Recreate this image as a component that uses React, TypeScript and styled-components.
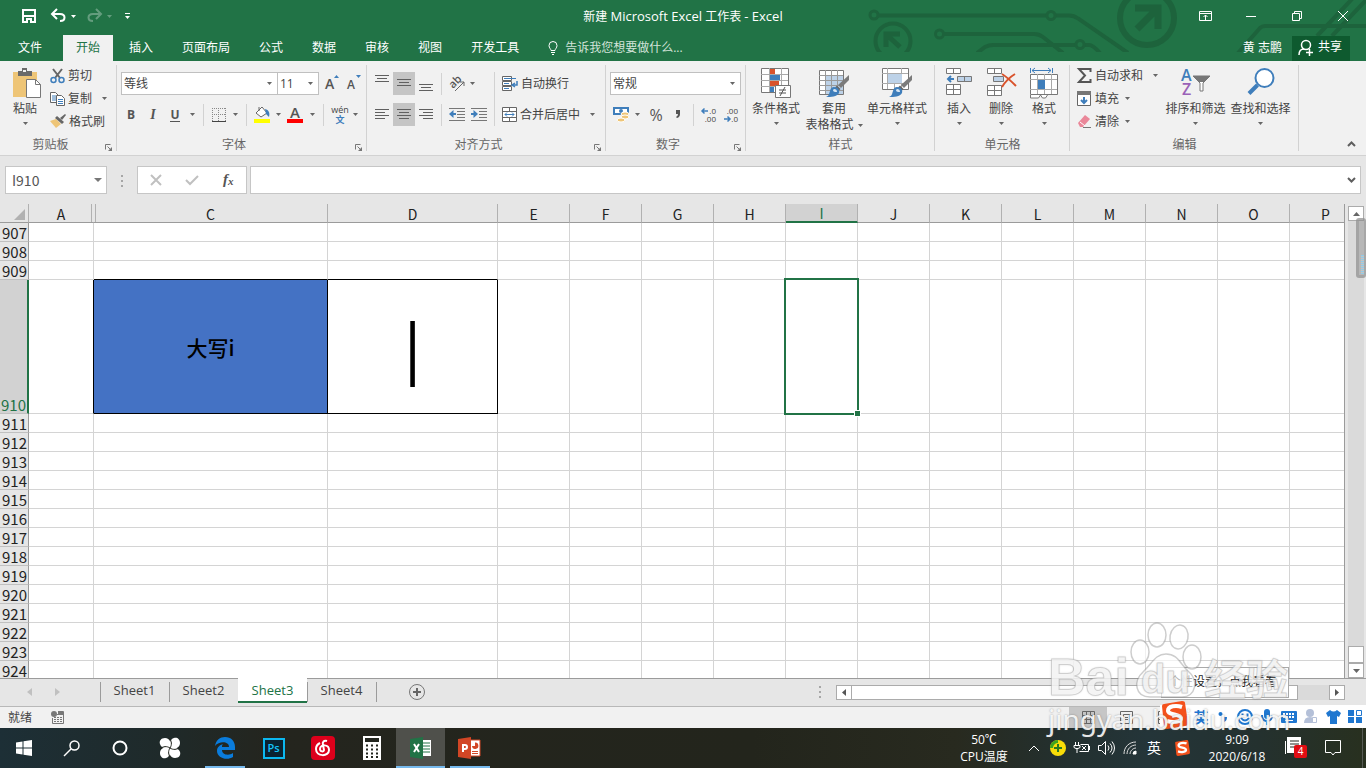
import React from "react";
import styled, { createGlobalStyle, css } from "styled-components";

const GREEN = "#217346";
const BLUE = "#3f7ebb";
const GREY = "#5e5e5e";

const Global = createGlobalStyle`
  *, *::before, *::after { box-sizing: border-box; }
  body { margin: 0; background: #e6e6e6; }
  button, input, select { font: inherit; color: inherit; }
  button { border: 0; background: none; padding: 0; margin: 0; }
  svg { overflow: visible; }
`;

const App_ = styled.div`
  position: relative;
  display: flex;
  flex-direction: column;
  height: 100vh;
  overflow: hidden;
  font: 12px/16px "Open Sans", "Noto Sans CJK SC", sans-serif;
  color: #444;
`;

/* ---------- title bar and tabs ---------- */
const Header = styled.header`
  position: relative;
  flex: none;
  background: ${GREEN};
  color: #fff;
`;
const Circuit = styled.svg`
  position: absolute;
  top: 0;
  right: 0;
  overflow: hidden;
`;
const TitleBar = styled.div`
  position: relative;
  display: grid;
  grid-template-columns: 1fr auto 1fr;
  align-items: center;
  height: 35px;
  padding-bottom: 3px;
`;
const Latin = styled.span`
  font-size: 13px;
`;
const QuickBar = styled.div`
  display: flex;
  align-items: center;
  padding-left: 22px;
`;
const QuickButton = styled.button<{ $gap?: number; $faint?: boolean }>`
  display: flex;
  align-items: center;
  gap: 5px;
  margin-right: ${(p) => p.$gap ?? 10}px;
  opacity: ${(p) => (p.$faint ? 0.3 : 1)};
`;
const WindowButtons = styled.div`
  display: flex;
  justify-content: flex-end;
`;
const WindowButton = styled.button`
  display: flex;
  justify-content: center;
  align-items: center;
  width: 46px;
  height: 30px;
`;
const TabBar = styled.nav`
  position: relative;
  display: flex;
  gap: 3px;
  height: 26px;
`;
const Tab = styled.button<{ $active?: boolean; $pad?: number }>`
  padding: 0 ${(p) => p.$pad ?? 13}px 1px;
  ${(p) => p.$active && css`background: #f1f1f1; color: ${GREEN};`}
`;
const TellMe = styled.button`
  display: flex;
  align-items: center;
  gap: 7px;
  padding-left: 13px;
  color: #d3e3da;
`;
const Account = styled.div`
  display: flex;
  align-items: center;
  gap: 10px;
  margin: 0 16px 0 auto;
`;
const Share = styled.button`
  display: flex;
  align-items: center;
  gap: 4px;
  height: 25px;
  padding: 0 8px 2px 6px;
  background: #0e5a2f;
`;

/* ---------- ribbon ---------- */
const Ribbon = styled.div`
  display: flex;
  flex: none;
  height: 95px;
  background: #f1f1f1;
  border-bottom: 1px solid #d2d2d2;
`;
const GroupBox = styled.section<{ $w: number }>`
  display: flex;
  flex-direction: column;
  flex: none;
  position: relative;
  width: ${(p) => p.$w}px;
  &::after {
    content: "";
    position: absolute;
    top: 4px;
    right: 0;
    bottom: 4px;
    border-right: 1px solid #d2d2d2;
  }
`;
const GroupBody = styled.div<{ $pad?: number }>`
  display: flex;
  height: 72px;
  padding-left: ${(p) => p.$pad ?? 3}px;
`;
const GroupFoot = styled.div`
  display: flex;
  align-items: center;
  height: 22px;
  padding-top: 1px;
  color: #666;
  span { flex: 1; text-align: center; }
  svg { margin: 6px 5px 0 4px; }
`;
const Stack = styled.div`
  display: flex;
  flex-direction: column;
  padding-top: 3px;
`;
const Lines = styled.div`
  display: flex;
  flex-direction: column;
  gap: 8px;
  padding-top: 11px;
`;
const Line = styled.div`
  display: flex;
  align-items: center;
  height: 23px;
`;
const SmallButton = styled.button<{ $gap?: number }>`
  display: flex;
  align-items: center;
  height: 23px;
  gap: 3px;
  white-space: nowrap;
  svg + span + svg { margin-left: ${(p) => p.$gap ?? 3}px; }
`;
const Tool = styled.button<{ $w?: number; $on?: boolean }>`
  display: flex;
  flex: none;
  justify-content: center;
  align-items: center;
  width: ${(p) => p.$w ?? 22}px;
  height: 23px;
  background: ${(p) => (p.$on ? "#c5c5c5" : "none")};
`;
const Letter = styled.span`
  font: 700 12px/16px "Open Sans", sans-serif;
  color: #555;
`;
const ItalicLetter = styled(Letter)`
  font-family: "Liberation Serif", serif;
  font-size: 14px;
  font-style: italic;
`;
const UnderLetter = styled(Letter)`
  border-bottom: 1px solid #555;
  line-height: 13px;
`;
const Percent = styled(Letter)`
  font-size: 16px;
  font-weight: 400;
`;
const Rule = styled.i<{ $m?: number; $h?: number }>`
  flex: none;
  width: 1px;
  height: ${(p) => p.$h ?? 22}px;
  margin: 0 ${(p) => p.$m ?? 5}px;
  background: #d2d2d2;
`;
const BigButton = styled.button<{ $w: number }>`
  display: flex;
  flex-direction: column;
  align-items: center;
  width: ${(p) => p.$w}px;
  padding-top: 7px;
  white-space: nowrap;
  & > svg:first-child { margin-bottom: 2px; flex: none; }
  & > svg:last-child { margin-top: 5px; }
`;
const BigLine = styled.span`
  display: flex;
  align-items: center;
  gap: 4px;
`;
const SelectWrap = styled.span<{ $w: number }>`
  position: relative;
  display: block;
  width: ${(p) => p.$w}px;
  margin-right: -1px;
  svg { position: absolute; right: 6px; top: 10px; }
`;
const Select = styled.select`
  appearance: none;
  display: block;
  width: 100%;
  height: 23px;
  padding: 0 2px;
  border: 1px solid #c0c0c0;
  border-radius: 0;
  background: #fff;
`;
const Collapse = styled.button`
  align-self: flex-end;
  margin: 0 10px 4px auto;
`;

/* ---------- formula bar ---------- */
const FormulaBar = styled.div`
  display: flex;
  flex: none;
  align-items: flex-start;
  height: 48px;
  padding: 10px 5px 0;
  background: #e6e6e6;
`;
const Field = styled.div<{ $w?: number }>`
  display: flex;
  align-items: center;
  height: 28px;
  padding: 0 4px 0 6px;
  background: #fff;
  border: 1px solid #c6c6c6;
  ${(p) => (p.$w ? css`width: ${p.$w}px;` : css`flex: 1;`)}
  input {
    flex: 1;
    min-width: 0;
    padding: 0;
    border: 0;
    background: none;
    font-size: 14px;
    color: #555;
    font-family: "Noto Sans CJK SC", sans-serif;
  }
`;
const Dots = styled.span`
  display: flex;
  flex-direction: column;
  gap: 3px;
  i { width: 2px; height: 2px; background: #a6a6a6; }
`;
const FormulaDots = styled(Dots)`
  margin: 9px 14px 0;
`;
const FxBox = styled.div`
  display: flex;
  width: 110px;
  height: 28px;
  margin-right: 3px;
  background: #fff;
  border: 1px solid #c6c6c6;
  button { flex: 1; display: flex; align-items: center; justify-content: center; }
`;

/* ---------- worksheet ---------- */
const SheetArea = styled.main`
  display: flex;
  flex: 1;
  min-height: 0;
`;
const GridClip = styled.div`
  flex: 1;
  min-width: 0;
  overflow: hidden;
  border-right: 1px solid #9b9b9b;
  background: linear-gradient(#e6e6e6 19px, #fff 19px);
`;
const Grid = styled.table`
  width: 1362px;
  table-layout: fixed;
  border-collapse: separate;
  border-spacing: 0;
  font: 15px/16px "Noto Sans CJK SC", sans-serif;
  color: #222;
`;
const ColHead = styled.th<{ $on?: boolean; $split?: boolean }>`
  position: relative;
  height: 19px;
  padding: 2px 0 0;
  font-weight: 400;
  font-size: 14px;
  line-height: 15px;
  background: ${(p) => (p.$on ? "#d2d2d2" : "#e6e6e6")};
  color: ${(p) => (p.$on ? GREEN : "#222")};
  border-right: 1px solid #b1b1b1;
  border-bottom: ${(p) => (p.$on ? `2px solid ${GREEN}` : "1px solid #9b9b9b")};
  ${(p) => p.$split && css`
    &::after {
      content: "";
      position: absolute;
      z-index: 1;
      top: 0;
      right: -3px;
      width: 5px;
      height: 18px;
      background: #e6e6e6;
      border: solid #b1b1b1;
      border-width: 0 1px;
    }
  `}
  svg { display: block; margin: 0 3px 0 auto; }
`;
const RowHead = styled.th<{ $on?: boolean }>`
  padding: 2px 1px 0 0;
  font-weight: 400;
  text-align: right;
  vertical-align: bottom;
  background: ${(p) => (p.$on ? "#d2d2d2" : "#e6e6e6")};
  color: ${(p) => (p.$on ? GREEN : "#222")};
  border-right: ${(p) => (p.$on ? `2px solid ${GREEN}` : "1px solid #9b9b9b")};
  border-bottom: 1px solid #c0c0c0;
`;
const Row = styled.tr<{ $h: number }>`
  height: ${(p) => p.$h}px;
`;
const Cell = styled.td<{ $blackRight?: boolean; $blackBottom?: boolean; $fill?: string }>`
  position: relative;
  padding: 0;
  text-align: center;
  background: ${(p) => p.$fill ?? "#fff"};
  border-right: 1px solid ${(p) => (p.$blackRight ? "#000" : "#d4d4d4")};
  border-bottom: 1px solid ${(p) => (p.$blackBottom ? "#000" : "#d4d4d4")};
`;
const Caption = styled.span`
  font-size: 21px;
  line-height: 28px;
  font-weight: 500;
  color: #000;
`;
const HugeLetter = styled.span`
  display: block;
  padding-top: 10px;
  font: 350 92px/122px "Open Sans", sans-serif;
  color: #000;
`;
const Selection = styled.div`
  position: absolute;
  inset: -2px;
  z-index: 1;
  border: 2px solid ${GREEN};
  &::after {
    content: "";
    position: absolute;
    right: -4px;
    bottom: -4px;
    width: 7px;
    height: 7px;
    background: ${GREEN};
    border: 1px solid #fff;
  }
`;
const VScroll = styled.div`
  display: flex;
  flex-direction: column;
  flex: none;
  width: 21px;
  padding: 2px 2px 0 3px;
  background: #e6e6e6;
`;
const ScrollButton = styled.button`
  display: flex;
  align-items: center;
  justify-content: center;
  flex: none;
  width: 16px;
  height: 15px;
  background: #fff;
  border: 1px solid #ababab;
`;
const VTrack = styled.div`
  display: flex;
  flex: 1;
  flex-direction: column;
  justify-content: flex-end;
  background: #dadada;
`;
const VThumb = styled.div`
  height: 17px;
  background: #fff;
  border: 1px solid #ababab;
`;
const FloatThumb = styled.div`
  position: absolute;
  top: 218px;
  right: 0;
  width: 10px;
  height: 60px;
  border: 3px solid rgba(150, 150, 150, 0.55);
  border-right-width: 2px;
  border-radius: 3px;
  background: rgba(140, 140, 140, 0.45);
  &::after {
    content: "";
    position: absolute;
    right: 0;
    bottom: 1px;
    width: 3px;
    height: 19px;
    background: repeating-linear-gradient(#8fcbe8 0 1px, #c3c3c3 1px 2px);
  }
`;

/* ---------- sheet tabs and status ---------- */
const SheetBar = styled.div`
  display: flex;
  flex: none;
  height: 28px;
  padding-right: 21px;
  background: #e6e6e6;
  box-shadow: inset 0 1px #9b9b9b;
`;
const SheetNav = styled.div`
  display: flex;
  align-items: center;
  gap: 23px;
  width: 100px;
  padding-left: 27px;
`;
const SheetTab = styled.button<{ $active?: boolean }>`
  width: 69px;
  height: 25px;
  font-size: 13px;
  line-height: 20px;
  padding-bottom: ${(p) => (p.$active ? 0 : 2)}px;
  color: ${(p) => (p.$active ? GREEN : "#444")};
  ${(p) => p.$active
    ? css`background: #fff; border-bottom: 2px solid ${GREEN}; font-weight: 500;`
    : css`background: linear-gradient(#9b9b9b, #9b9b9b) 0 4px / 1px 20px no-repeat;`}
`;
const TabEnd = styled.i`
  width: 1px;
  height: 20px;
  margin: 4px 32px 0 0;
  background: #9b9b9b;
`;
const NewSheet = styled.button`
  display: flex;
  align-items: center;
`;
const HScroll = styled.div`
  display: flex;
  align-items: center;
  width: 526px;
  margin-left: auto;
`;
const HTrack = styled.div`
  flex: 1;
  height: 15px;
  background: #dadada;
`;
const HThumb = styled.div`
  width: 447px;
  height: 15px;
  margin-left: -1px;
  background: #fff;
  border: 1px solid #ababab;
`;
const StatusBar = styled.footer`
  display: flex;
  flex: none;
  align-items: center;
  gap: 19px;
  height: 22px;
  padding: 0 8px;
  background: #f1f1f1;
  border-top: 1px solid #b8b8b8;
`;
const ViewButtons = styled.div`
  display: flex;
  align-self: stretch;
  margin: 0 175px 0 auto;
`;
const ViewButton = styled.button<{ $on?: boolean }>`
  display: flex;
  align-items: center;
  justify-content: center;
  width: 38px;
  background: ${(p) => (p.$on ? "#c6c6c6" : "none")};
`;

/* ---------- taskbar ---------- */
const TaskBar = styled.div`
  display: flex;
  flex: none;
  height: 40px;
  padding-right: 3px;
  color: #fff;
  background: linear-gradient(90deg, #1d2f36 0, #1f2a2a 12%, #24251e 20%, #23251c 55%, #282a1f 70%, #23302f 78%, #243539 84%, #24312f 92%, #28301f 100%);
`;
const Task = styled.button<{ $w?: number; $run?: boolean; $active?: boolean }>`
  position: relative;
  display: flex;
  align-items: center;
  justify-content: center;
  width: ${(p) => p.$w ?? 49}px;
  background: ${(p) => (p.$active ? "#4f504b" : "none")};
  ${(p) => p.$run && css`
    &::after {
      content: "";
      position: absolute;
      left: ${p.$active ? 0 : 5}px;
      right: ${p.$active ? 0 : 4}px;
      bottom: 0;
      height: 2px;
      background: #76b9ed;
    }
  `}
`;
const Apps = styled.div`
  display: flex;
  margin-left: 4px;
`;
const TrayText = styled.div<{ $w: number }>`
  width: ${(p) => p.$w}px;
  padding-top: 3px;
  text-align: center;
  line-height: 17px;
  white-space: nowrap;
`;
const Tray = styled.div`
  display: flex;
  margin-left: auto;
`;
const TrayIcon = styled.button<{ $w?: number }>`
  display: flex;
  align-items: center;
  justify-content: center;
  width: ${(p) => p.$w ?? 24}px;
  font-size: 14px;
`;
const ShowDesktop = styled.button`
  width: 12px;
  border-right: 1px solid #565a54;
`;
const PsMark = styled.span`
  display: flex;
  justify-content: center;
  width: 22px;
  height: 21px;
  border: 2px solid #0cb8f0;
  background: #0a2231;
  color: #12c4fb;
  font-size: 11px;
  font-weight: 600;
`;

/* ---------- floating layers ---------- */
const Tooltip = styled.div`
  position: absolute;
  right: 77px;
  bottom: 70px;
  width: 128px;
  height: 31px;
  padding-right: 4px;
  border: 1px solid #aaa;
  background: #fff;
  text-align: center;
  line-height: 28px;
  color: #222;
`;
const ImeBar = styled.div`
  position: absolute;
  right: 0;
  bottom: 40px;
  display: flex;
  align-items: center;
  height: 23px;
  background: #fff;
  color: #1f77d0;
`;
const ImeButton = styled.button`
  display: flex;
  align-items: center;
  justify-content: center;
  width: 22px;
  font-size: 15px;
  font-weight: 700;
`;
const ImeLogo = styled(ImeButton)`
  width: 30px;
  padding: 0 4px 4px 0;
  justify-content: flex-start;
  svg { flex: none; }
`;
const Watermark = styled.div`
  position: absolute;
  right: 76px;
  bottom: 28px;
  width: 242px;
  pointer-events: none;
  color: rgba(255, 255, 255, 0.8);
  text-shadow: 0 0 2px rgba(110, 110, 110, 0.4);
  white-space: nowrap;
`;
const BrandRow = styled.div`
  display: flex;
  align-items: flex-end;
  height: 76px;
  -webkit-text-stroke: 1px rgba(150, 150, 150, 0.35);
`;
const BrandLatin = styled.span`
  width: 81px;
  font: 700 52px/42px "Liberation Sans", sans-serif;
`;
const BrandPaw = styled.span`
  position: relative;
  width: 74px;
  height: 76px;
  svg { display: block; }
`;
const PawText = styled.span`
  position: absolute;
  left: 12px;
  bottom: 0;
  font: 700 40px/38px "Liberation Sans", sans-serif;
`;
const BrandHan = styled.span`
  margin-left: 1px;
  font: 700 42px/42px "Noto Sans CJK SC", sans-serif;
`;
const Site = styled.div`
  font: 28px/42px "Noto Sans", sans-serif;
  color: rgba(255, 255, 255, 0.9);
  text-shadow: 0 0 2px rgba(90, 90, 90, 0.6);
`;

/* ---------- drawings ---------- */
type IconProps = { w?: number; h?: number; children?: React.ReactNode };
const Icon = ({ w = 16, h = 16, children }: IconProps) => (
  <svg width={w} height={h} viewBox={`0 0 ${w} ${h}`} fill="none" stroke={GREY} aria-hidden="true">
    {children}
  </svg>
);
const Caret = ({ fill = "#666" }: { fill?: string }) => (
  <svg width="5" height="3" viewBox="0 0 5 3" fill={fill} aria-hidden="true"><path d="M0 0h5L2.5 3z" /></svg>
);
const CaretTool = ({ w = 12, label }: { w?: number; label: string }) => (
  <Tool $w={w} aria-label={label}><Caret /></Tool>
);
const Launcher = () => (
  <Icon w={7} h={7}><path d="M.5 5.5v-5h5" stroke="#777" /><path d="M2.5 2.5l3 3" stroke="#777" /><path d="M7 3v4H3z" fill="#777" stroke="none" /></Icon>
);
const AlignIcon = ({ widths, top = 2, right, center }: { widths: number[]; top?: number; right?: boolean; center?: boolean }) => (
  <Icon w={14} h={20}>
    {widths.map((n, i) => {
      const x = center ? (14 - n) / 2 : right ? 14 - n : 0;
      return <path key={i} d={`M${x} ${top + i * 3 + 0.5}h${n}`} stroke="#606060" />;
    })}
  </Icon>
);
const IndentIcon = ({ flip }: { flip?: boolean }) => (
  <Icon w={17} h={14}>
    <path d="M0 .5h16M8 3.5h8M8 6.5h8M8 9.5h8M0 12.5h16" stroke="#777" />
    <g transform={flip ? "translate(7 -1) scale(-1 1)" : "translate(0 -1)"}><path d="M7 7H2" stroke={BLUE} strokeWidth="2" /><path d="M4.5 3v8L0 7z" fill={BLUE} stroke="none" /></g>
  </Icon>
);
const Brush = ({ x, y }: { x: number; y: number }) => (
  <g transform={`translate(${x} ${y})`} stroke="none">
    <path d="M23 0v5L15 13l-3-3z" fill="#7b7b7b" />
    <path d="M11 10.5l3.500 3.500-2 2-3.500-3.500z" fill="#666" />
    <path d="M8 12c4 0 6 3 5 6-2 4-8 4-13 4 3-1 3-3 4-6 .6-2.500 2-4 4-4z" fill={BLUE} />
    <path d="M8 14c2 0 3 1 3 3-2 0-4 0-4-2z" fill="#d9e7f4" />
  </g>
);
const SogouMark = ({ size }: { size: number }) => (
  <svg width={size} height={size} viewBox="0 0 28 28" aria-hidden="true">
    <path d="M2 5Q2 3 4 3L22 0Q25 0 25 2l3 20q0 3-3 3L7 28q-3 0-3-3z" fill="#f4511c" />
    <path d="M22 6c-6-2-14-1-14 3.500 0 5 12 3 13 7.500.5 4-8 5-14 3" fill="none" stroke="#fff" strokeWidth="4" />
  </svg>
);
const Disk = () => (
  <Icon w={14} h={14}><path d="M1 1h12v12H1z" stroke="#fff" strokeWidth="2" /><path d="M2 7h10" stroke="#fff" strokeWidth="2" /><path d="M4 9h6v5H4z" fill="#fff" stroke="none" /><path d="M6 11h2v3H6z" fill={GREEN} stroke="none" /></Icon>
);
const Undo = () => (
  <Icon w={15} h={14}><path d="M6 0L1 5l5 5M1 5h8c6 0 6 7 0 7" stroke="#fff" strokeWidth="2" /></Icon>
);
const Redo = () => (
  <Icon w={15} h={14}><path d="M9 0l5 5-5 5M14 5H6c-6 0-6 7 0 7" stroke="#fff" strokeWidth="2" /></Icon>
);
const PasteIcon = () => (
  <Icon w={34} h={31}>
    <g transform="translate(4 0)">
      <path d="M1 4h24v25H1z" fill="#eec577" stroke="none" />
      <path d="M6 8V3h4V0h5v3h5v5z" fill="#6a6a6a" stroke="none" /><path d="M11 2h3v2h-3z" fill="#f1f1f1" stroke="none" />
      <path d="M14.500 11.500h9l5 5v13h-14z" fill="#fff" stroke="#777" /><path d="M23.500 11.500v5h5" stroke="#777" />
    </g>
  </Icon>
);
const CutIcon = () => (
  <Icon w={15} h={16}><path d="M3 1l7 9M12 1L5 10" stroke="#666" strokeWidth="2" /><circle cx="3.500" cy="12" r="2.500" stroke={BLUE} strokeWidth="1.500" /><circle cx="11.500" cy="12" r="2.500" stroke={BLUE} strokeWidth="1.500" /></Icon>
);
const CopyIcon = () => (
  <Icon w={15} h={15}><path d="M.5 1.500h5l3 3v7h-8z" fill="#fff" stroke="#666" /><path d="M2 5h4M2 7h4M2 9h4" stroke={BLUE} /><path d="M6.500 4.500h5l3 3v7h-8z" fill="#fff" stroke="#666" /><path d="M8 8.500h5M8 10.500h5M8 12.500h5" stroke={BLUE} /></Icon>
);
const PainterIcon = () => (
  <Icon w={16} h={15}><path d="M0 7l6-2 5 5-5 4z" fill="#eec577" stroke="none" /><path d="M5 4l2-2 7 6-2 2z" fill="#666" stroke="none" /><path d="M10 4l5-4 1 1-4 5z" fill="#666" stroke="none" /></Icon>
);
const SizeIcon = ({ up }: { up?: boolean }) => (
  <svg width="14" height="16" viewBox="0 0 14 16" fontFamily="Open Sans" fontWeight="600" aria-hidden="true">
    <text x="0" y="13" fontSize={up ? 14 : 12} fill="#555">A</text>
    <path d={up ? "M9 2h5l-2.500-3z" : "M9 -1h5l-2.500 3z"} fill={BLUE} />
  </svg>
);
const BorderIcon = () => (
  <Icon w={14} h={14}><path d="M0 .5h14M0 6.500h14M.5 0v13M6.500 0v13M13.500 0v13" stroke="#888" strokeDasharray="1 1" /><path d="M0 13.500h14" stroke="#444" /></Icon>
);
const FillIcon = () => (
  <Icon w={16} h={17}><path d="M2 7l6-6 5 6-6 4z" fill="#fff" stroke="#666" /><path d="M5 5V1" stroke="#666" /><path d="M11 3c4 1 5 4 4 8l-3-3z" fill={BLUE} stroke="none" /><path d="M0 13h16v4H0z" fill="#ff0" stroke="none" /></Icon>
);
const FontColorIcon = () => (
  <svg width="16" height="17" viewBox="0 0 16 17" aria-hidden="true"><text x="8" y="12" textAnchor="middle" fontFamily="Open Sans" fontSize="15" fontWeight="600" fill="#555">A</text><path d="M0 13h16v4H0z" fill="#f00" /></svg>
);
const PinyinIcon = () => (
  <svg width="18" height="18" viewBox="0 0 18 18" textAnchor="middle" aria-hidden="true"><text x="9" y="7" fontFamily="Open Sans" fontSize="9" fill="#444">wén</text><text x="9" y="17" fontFamily="Noto Sans CJK SC" fontSize="9" fontWeight="700" fill={BLUE}>文</text></svg>
);
const OrientIcon = () => (
  <svg width="18" height="16" viewBox="0 0 18 16" fill="none" stroke="#666" aria-hidden="true"><text x="0" y="0" transform="translate(5 13) rotate(-45)" fontFamily="Open Sans" fontSize="11" fontWeight="600" fill="#555" stroke="none">ab</text><path d="M7 15l9-9M12 6h4v4" /></svg>
);
const WrapIcon = () => (
  <Icon w={16} h={16}><path d="M.5.500h9v4h-9zM.5 5.500h9v4h-9zM.5 10.500h9v4h-9z" fill="#fff" stroke="#666" /><path d="M2 2.500h12M2 7.500h5M2 12.500h5" stroke={BLUE} /><path d="M15 5v4h-4M13 7l-3 2 3 2" stroke={BLUE} strokeWidth="1.500" /></Icon>
);
const MergeIcon = () => (
  <Icon w={15} h={15}><path d="M.5.500h14v14H.5zM.5 4.500h14M.5 10.500h14M7.500.500v4M7.500 10.500v4" fill="#fff" stroke="#666" /><path d="M3 7.500h9M5 5.500l-2 2 2 2M10 5.500l2 2-2 2" stroke={BLUE} /></Icon>
);
const MoneyIcon = () => (
  <Icon w={17} h={17}><path d="M0 1h16v8H0z" fill={BLUE} stroke="none" /><path d="M2 3h12v4H2z" fill="#fff" stroke="none" /><circle cx="8" cy="5" r="2" fill={BLUE} stroke="none" /><ellipse cx="12" cy="8" rx="4" ry="2" fill="#eec577" stroke="#fff" /><ellipse cx="12" cy="11" rx="4" ry="2" fill="#eec577" stroke="#fff" /><ellipse cx="8" cy="14" rx="4" ry="2" fill="#eec577" stroke="#fff" /></Icon>
);
const DecimalIcon = ({ more }: { more?: boolean }) => (
  <svg width="16" height="16" viewBox="0 0 16 16" textAnchor="end" fontFamily="Open Sans" fontSize="8" fill="#444" aria-hidden="true">
    <text x="15" y="7">{more ? ".0" : ".00"}</text><text x="15" y="15">{more ? ".00" : ".0"}</text>
    {more ? <path d="M1 4h6M3.500 1.500L1 4l2.500 2.500" stroke={BLUE} fill="none" strokeWidth="1.500" /> : <path d="M1 12h6M4.500 9.500L7 12l-2.500 2.500" stroke={BLUE} fill="none" strokeWidth="1.500" />}
  </svg>
);
const CondIcon = () => (
  <Icon w={30} h={31}>
    <path d="M.5.500h27v24H.5z" fill="#fff" stroke="#777" /><path d="M0 6.500h27M0 12.500h27M0 18.500h27M8.500 0v24M20.500 0v24" stroke="#aaa" />
    <path d="M9 1h5v5H9zM9 13h9v5H9z" fill="#d9532c" stroke="none" /><path d="M9 7h10v5H9zM9 19h4v5H9z" fill={BLUE} stroke="none" />
    <path d="M14.500 17.500h15v12h-15z" fill="#fff" stroke="#777" /><path d="M18 22h7M18 25h7M24 19l-5 9" stroke="#555" />
  </Icon>
);
const TableFmtIcon = () => (
  <Icon w={30} h={31}>
    <path d="M.5 2.500h24v24H.5z" fill="#fff" stroke="#777" /><path d="M7 8h17v18H7z" fill="#bdd2e8" stroke="none" /><path d="M0 7.500h24M0 12.500h24M0 17.500h24M0 22.500h24M6.500 2v24M12.500 2v24M18.500 2v24" stroke="#999" />
    <Brush x={7} y={7} />
  </Icon>
);
const CellStyleIcon = () => (
  <Icon w={30} h={31}>
    <path d="M.5.500h26v21H.5z" fill="#fff" stroke="#777" /><path d="M0 5.500h26M0 15.500h26M5.500 0v21M19.500 0v21M12.500 15v6" stroke="#aaa" /><path d="M6 6h14v9H6z" fill="#bdd2e8" stroke="none" />
    <Brush x={7} y={7} />
  </Icon>
);
const InsertIcon = () => (
  <Icon w={28} h={31}>
    <path d="M1.500.500h14v5h-14zM8.500.500v5M1.500 16.500h14v10h-14zM1.500 21.500h14M8.500 16.500v10" fill="#fff" stroke="#777" />
    <path d="M12.500 8.500h14v5h-14zM19.500 8.500v5" fill="#bdd2e8" stroke="#777" /><path d="M9 11H3M6 8l-3 3 3 3" stroke={BLUE} strokeWidth="2" />
  </Icon>
);
const DeleteIcon = () => (
  <Icon w={30} h={31}>
    <path d="M1.500.500h14v5h-14zM8.500.500v5M1.500 17.500h14v10h-14zM1.500 22.500h14M8.500 17.500v10" fill="#fff" stroke="#777" />
    <path d="M7.500 8.500h10v5h-10z" fill="#bdd2e8" stroke="#777" /><path d="M16 6c5 3 10 8 14 12M29 6c-5 3-10 8-13 13" stroke="#d9532c" strokeWidth="2" />
  </Icon>
);
const FormatIcon = () => (
  <Icon w={30} h={31}>
    <path d="M1.500 0v5M23.500 0v5M3 2.500h19M6 0L3 2.500 6 5M19 0l3 2.500L19 5" stroke={BLUE} />
    <path d="M1.500 6.500h27v20h-27z" fill="#fff" stroke="#777" /><path d="M1 11.500h27M1 21.500h27M8.500 6v20M15.500 6v20M22.500 6v20" stroke="#aaa" /><path d="M9 12h7v9H9z" fill={BLUE} stroke="none" />
    <path d="M1.500 27v3h8l2-3 2 3h3l2-3" fill="#fff" stroke="#777" />
  </Icon>
);
const SumIcon = () => (
  <Icon w={15} h={15}><path d="M13.500 4V1H2l6 6.500L2 14h11.500v-3" stroke="#555" strokeWidth="2" /></Icon>
);
const FillDownIcon = () => (
  <Icon w={15} h={15}><path d="M.5.500h13v14H.5z" fill="#fff" stroke="#666" /><path d="M0 0h14v4H0z" fill="#777" stroke="none" /><path d="M7 6v6M4 9l3 3 3-3" stroke={BLUE} strokeWidth="2" /></Icon>
);
const EraserIcon = () => (
  <Icon w={15} h={15}><path d="M1 9l7-8 5 4-7 8H3z" fill="#ea8799" stroke="none" /><path d="M3 8l5 4" stroke="#fff" /><path d="M6 13.500h8" stroke="#777" /></Icon>
);
const SortIcon = () => (
  <svg width="30" height="31" viewBox="0 0 30 31" fontFamily="Open Sans" fontSize="16" fontWeight="600" aria-hidden="true">
    <text x="0" y="13" fill={BLUE}>A</text><text x="1" y="27" fill="#9a62b8">Z</text>
    <path d="M12 8h17l-7 7v8h-3v-8z" fill="#fff" stroke="#777" /><path d="M12 8h17l-6 6h-5z" fill="#777" />
  </svg>
);
const FindIcon = () => (
  <Icon w={30} h={31}><circle cx="18.500" cy="10" r="9" fill="#fff" stroke={BLUE} strokeWidth="2" /><path d="M11.500 17L3 25.500" stroke={BLUE} strokeWidth="4" /></Icon>
);

const CircuitArt = () => (
  <Circuit width="506" height="52" viewBox="0 0 506 52" fill="none" stroke="#1d633c" strokeWidth="4" aria-hidden="true">
    <circle cx="14" cy="15" r="4" strokeWidth="3" /><path d="M18 15.500h169M195 15.500h14q5 0 9 3L268 53" /><circle cx="191" cy="15.500" r="4" strokeWidth="3" />
    <circle cx="79.500" cy="34" r="4" strokeWidth="3" /><path d="M84 34h90q5 0 9 3l20 16M117 53l8-6q4-2 8-2h83M225 45h4q4 0 11 8" /><circle cx="220" cy="44.500" r="4" strokeWidth="3" />
    <circle cx="287" cy="18" r="27" strokeWidth="6" /><path d="M275 8h23v21M298 8l-21 21" strokeWidth="7" />
    <circle cx="33" cy="41" r="17.500" /><path d="M26 47V34h14M27 35l13 12" strokeWidth="5" />
    <path d="M378 53l22-25q2-2 5-2h101M457 36l36-38M472 36l36-38" />
  </Circuit>
);

/* ---------- parts ---------- */
const Group = ({ name, w, pad, launcher, children }: { name: string; w: number; pad?: number; launcher?: boolean; children: React.ReactNode }) => (
  <GroupBox $w={w} aria-label={name}>
    <GroupBody $pad={pad}>{children}</GroupBody>
    <GroupFoot><span>{name}</span>{launcher && <Launcher />}</GroupFoot>
  </GroupBox>
);
const Big = ({ w, icon, label }: { w: number; icon: React.ReactNode; label: string }) => (
  <BigButton $w={w}>{icon}<span>{label}</span><Caret /></BigButton>
);
const Combo = ({ w, value, label }: { w: number; value: string; label: string }) => (
  <SelectWrap $w={w}><Select aria-label={label} defaultValue={value}><option>{value}</option></Select><Caret /></SelectWrap>
);

const columns: [string, number][] = [
  ["A", 65], ["C", 234], ["D", 170], ["E", 72], ["F", 72], ["G", 72], ["H", 72], ["I", 72],
  ["J", 72], ["K", 72], ["L", 72], ["M", 72], ["N", 72], ["O", 72], ["P", 72],
];
const rows = Array.from({ length: 18 }, (_, i) => 907 + i);
const tabs = ["插入", "页面布局", "公式", "数据", "审核", "视图", "开发工具"];

const Worksheet = () => (
  <Grid>
    <colgroup><col style={{ width: 29 }} />{columns.map(([c, w]) => <col key={c} style={{ width: w }} />)}</colgroup>
    <thead>
      <tr>
        <ColHead aria-label="全选"><Icon w={11} h={11}><path d="M11 0v11H0z" fill="#b1b1b1" stroke="none" /></Icon></ColHead>
        {columns.map(([c]) => <ColHead key={c} scope="col" $on={c === "I"} $split={c === "A"}>{c}</ColHead>)}
      </tr>
    </thead>
    <tbody>
      {rows.map((r) => (
        <Row key={r} $h={r === 910 ? 134 : 19}>
          <RowHead scope="row" $on={r === 910}>{r}</RowHead>
          {columns.map(([c]) => {
            const boxed = c === "C" || c === "D";
            return (
              <Cell
                key={c}
                $blackRight={r === 910 && (boxed || c === "A")}
                $blackBottom={boxed && (r === 909 || r === 910)}
                $fill={r === 910 && c === "C" ? "#4472c4" : undefined}
              >
                {r === 910 && c === "C" && <Caption>大写i</Caption>}
                {r === 910 && c === "D" && <HugeLetter>I</HugeLetter>}
                {r === 910 && c === "I" && <Selection />}
              </Cell>
            );
          })}
        </Row>
      ))}
    </tbody>
  </Grid>
);

export default function App() {
  return (
    <App_>
      <Global />
      <Header>
        <CircuitArt />
        <TitleBar>
          <QuickBar>
            <QuickButton $gap={15} aria-label="保存"><Disk /></QuickButton>
            <QuickButton $gap={11} aria-label="撤消"><Undo /><Caret fill="#fff" /></QuickButton>
            <QuickButton $gap={13} $faint aria-label="恢复"><Redo /><Caret fill="#fff" /></QuickButton>
            <QuickButton aria-label="自定义快速访问工具栏"><Icon w={6} h={6}><path d="M0 .5h5" stroke="#fff" /><path d="M0 3h5L2.500 6z" fill="#fff" stroke="none" /></Icon></QuickButton>
          </QuickBar>
          <span>新建 <Latin>Microsoft Excel</Latin> 工作表 <Latin>- Excel</Latin></span>
          <WindowButtons>
            <WindowButton aria-label="功能区显示选项"><Icon w={13} h={10}><path d="M.5.500h12v9H.5zM.5 2.500h12M6.500 9V4M4.500 6l2-2 2 2" stroke="#fff" /></Icon></WindowButton>
            <WindowButton aria-label="最小化"><Icon w={10} h={10}><path d="M0 5.500h10" stroke="#fff" /></Icon></WindowButton>
            <WindowButton aria-label="还原"><Icon w={10} h={10}><path d="M.5 2.500h7v7h-7zM2.500 2.500v-2h7v7h-2" stroke="#fff" /></Icon></WindowButton>
            <WindowButton aria-label="关闭"><Icon w={10} h={10}><path d="M0 0l10 10M10 0L0 10" stroke="#fff" /></Icon></WindowButton>
          </WindowButtons>
        </TitleBar>
        <TabBar>
          <Tab $pad={18}>文件</Tab>
          <Tab $active>开始</Tab>
          {tabs.map((t) => <Tab key={t}>{t}</Tab>)}
          <TellMe><Icon w={10} h={14}><path d="M3 9.500C3 8 1 7 1 4.500a4 4 0 0 1 8 0C9 7 7 8 7 9.500zM3 11.500h4M4 13.500h2" stroke="#fff" /></Icon>告诉我您想要做什么...</TellMe>
          <Account>
            <span>黄 志鹏</span>
            <Share><Icon w={16} h={17}><circle cx="8" cy="6" r="4.500" stroke="#fff" strokeWidth="1.500" /><path d="M1 16c0-4 2-6 5-6M8 13.500h7M11.500 10v7" stroke="#fff" strokeWidth="1.500" /></Icon>共享</Share>
          </Account>
        </TabBar>
      </Header>

      <Ribbon>
        <Group name="剪贴板" w={117} pad={8} launcher>
          <BigButton $w={34}><PasteIcon /><span>粘贴</span><Caret /></BigButton>
          <i style={{ width: 8 }} />
          <Stack>
            <SmallButton><CutIcon /><span>剪切</span></SmallButton>
            <SmallButton $gap={7}><CopyIcon /><span>复制</span><Caret /></SmallButton>
            <SmallButton><PainterIcon /><span>格式刷</span></SmallButton>
          </Stack>
        </Group>
        <Group name="字体" w={250} launcher>
          <Lines>
            <Line>
              <Rule $m={0} $h={0} />
              <Combo w={157} value="等线" label="字体" /><Combo w={42} value="11" label="字号" />
              <Rule $m={1} $h={0} />
              <Tool aria-label="增大字号"><SizeIcon up /></Tool><Tool aria-label="减小字号"><SizeIcon /></Tool>
            </Line>
            <Line>
              <Tool><Letter>B</Letter></Tool><Tool><ItalicLetter>I</ItalicLetter></Tool><Tool><UnderLetter>U</UnderLetter></Tool>
              <CaretTool label="下划线" /><Rule />
              <Tool $w={20} aria-label="边框"><BorderIcon /></Tool><CaretTool label="边框选项" /><Rule />
              <Tool $w={20} aria-label="填充颜色"><FillIcon /></Tool><CaretTool label="填充颜色选项" />
              <Tool aria-label="字体颜色"><FontColorIcon /></Tool><CaretTool label="字体颜色选项" /><Rule />
              <Tool aria-label="拼音"><PinyinIcon /></Tool><CaretTool w={8} label="拼音选项" />
            </Line>
          </Lines>
        </Group>
        <Group name="对齐方式" w={239} pad={4} launcher>
          <Lines>
            <Line>
              <Tool aria-label="顶端对齐"><AlignIcon widths={[14, 10, 14]} top={1} center /></Tool>
              <Tool $on aria-label="垂直居中"><AlignIcon widths={[14, 10, 14]} top={5} center /></Tool>
              <Tool aria-label="底端对齐"><AlignIcon widths={[14, 10, 14]} top={10} center /></Tool>
              <Rule $m={4} /><Tool aria-label="方向"><OrientIcon /></Tool><CaretTool w={8} label="方向选项" />
            </Line>
            <Line>
              <Tool aria-label="左对齐"><AlignIcon widths={[14, 10, 14, 10]} top={4} /></Tool>
              <Tool $on aria-label="居中"><AlignIcon widths={[14, 10, 14, 10]} top={4} center /></Tool>
              <Tool aria-label="右对齐"><AlignIcon widths={[14, 10, 14, 10]} top={4} right /></Tool>
              <Rule $m={4} /><Tool aria-label="减少缩进"><IndentIcon /></Tool><Tool aria-label="增加缩进"><IndentIcon flip /></Tool>
            </Line>
          </Lines>
          <Lines><Rule $m={4} $h={54} /></Lines>
          <i style={{ width: 3 }} />
          <Lines>
            <SmallButton><WrapIcon /><span>自动换行</span></SmallButton>
            <SmallButton $gap={7}><MergeIcon /><span>合并后居中</span><Caret /></SmallButton>
          </Lines>
        </Group>
        <Group name="数字" w={140} pad={4} launcher>
          <Lines>
            <Combo w={131} value="常规" label="数字格式" />
            <Line>
              <Tool aria-label="会计数字格式"><MoneyIcon /></Tool><CaretTool w={10} label="会计选项" />
              <Rule $m={1} $h={0} />
              <Tool><Percent>%</Percent></Tool>
              <Tool aria-label="千位分隔"><Icon w={6} h={12}><path d="M1 1h4v4q0 3-3 4l-1-1q2-1 2-3H1z" fill="#555" stroke="none" /></Icon></Tool>
              <Rule $m={4} />
              <Tool aria-label="增加小数位数"><DecimalIcon more /></Tool><Tool aria-label="减少小数位数"><DecimalIcon /></Tool>
            </Line>
          </Lines>
        </Group>
        <Group name="样式" w={189} pad={1}>
          <Big w={58} icon={<CondIcon />} label="条件格式" />
          <BigButton $w={58}><TableFmtIcon /><span>套用</span><BigLine>表格格式<Caret /></BigLine></BigButton>
          <Big w={68} icon={<CellStyleIcon />} label="单元格样式" />
        </Group>
        <Group name="单元格" w={135} pad={3}>
          <Big w={42} icon={<InsertIcon />} label="插入" />
          <Big w={42} icon={<DeleteIcon />} label="删除" />
          <Big w={44} icon={<FormatIcon />} label="格式" />
        </Group>
        <Group name="编辑" w={229} pad={7}>
          <Stack>
            <SmallButton $gap={7}><SumIcon /><span>自动求和</span><Caret /></SmallButton>
            <SmallButton><FillDownIcon /><span>填充</span><Caret /></SmallButton>
            <SmallButton><EraserIcon /><span>清除</span><Caret /></SmallButton>
          </Stack>
          <i style={{ width: 5 }} />
          <Big w={65} icon={<SortIcon />} label="排序和筛选" />
          <Big w={65} icon={<FindIcon />} label="查找和选择" />
        </Group>
        <Collapse aria-label="折叠功能区"><Icon w={9} h={6}><path d="M1 5l3.500-3.500L8 5" strokeWidth="2" /></Icon></Collapse>
      </Ribbon>

      <FormulaBar>
        <Field $w={102}><input aria-label="名称框" defaultValue="I910" /><svg width="8" height="4" viewBox="0 0 8 4" fill="#777"><path d="M0 0h8L4 4z" /></svg></Field>
        <FormulaDots><i /><i /><i /></FormulaDots>
        <FxBox>
          <button aria-label="取消"><Icon w={10} h={10}><path d="M0 0l10 10M10 0L0 10" stroke="#c0c0c0" strokeWidth="2" /></Icon></button>
          <button aria-label="输入"><Icon w={14} h={11}><path d="M1 5l4 4 8-8" stroke="#c0c0c0" strokeWidth="2" /></Icon></button>
          <button aria-label="插入函数"><svg width="14" height="16" viewBox="0 0 14 16" fontFamily="Liberation Serif" fontStyle="italic" fontWeight="700" fill="#555"><text x="2" y="12" fontSize="15">f</text><text x="7" y="13" fontSize="11">x</text></svg></button>
        </FxBox>
        <Field><input aria-label="编辑栏" /><Icon w={9} h={6}><path d="M1 1l3.500 3.500L8 1" strokeWidth="2" /></Icon></Field>
      </FormulaBar>

      <SheetArea>
        <GridClip><Worksheet /></GridClip>
        <VScroll>
          <ScrollButton aria-label="向上滚动"><Icon w={7} h={4}><path d="M0 4h7L3.500 0z" fill="#666" stroke="none" /></Icon></ScrollButton>
          <VTrack><VThumb /></VTrack>
          <ScrollButton aria-label="向下滚动"><Icon w={7} h={4}><path d="M0 0h7L3.500 4z" fill="#666" stroke="none" /></Icon></ScrollButton>
        </VScroll>
      </SheetArea>

      <SheetBar>
        <SheetNav>
          <Icon w={5} h={8}><path d="M5 0v8L0 4z" fill="#c0c0c0" stroke="none" /></Icon>
          <Icon w={5} h={8}><path d="M0 0v8l5-4z" fill="#c0c0c0" stroke="none" /></Icon>
        </SheetNav>
        {["Sheet1", "Sheet2", "Sheet3", "Sheet4"].map((s) => <SheetTab key={s} $active={s === "Sheet3"}>{s}</SheetTab>)}
        <TabEnd />
        <NewSheet aria-label="新工作表"><Icon w={16} h={16}><circle cx="8" cy="8" r="7.500" stroke="#777" /><path d="M4 8h8M8 4v8" stroke="#666" strokeWidth="2" /></Icon></NewSheet>
        <HScroll>
          <Dots><i /><i /><i /></Dots>
          <i style={{ width: 15 }} />
          <ScrollButton aria-label="向左滚动"><Icon w={4} h={7}><path d="M4 0v7L0 3.500z" fill="#555" stroke="none" /></Icon></ScrollButton>
          <HTrack><HThumb /></HTrack>
          <ScrollButton aria-label="向右滚动"><Icon w={4} h={7}><path d="M0 0v7l4-3.500z" fill="#555" stroke="none" /></Icon></ScrollButton>
        </HScroll>
      </SheetBar>

      <StatusBar>
        <span>就绪</span>
        <Icon w={13} h={13}><circle cx="3" cy="3" r="3" fill="#777" stroke="none" /><path d="M7 .5h5.500v12H1.500V7M6 3.500h6" stroke="#777" /><path d="M7 1h5v2H7zM3 6h2v1H3zM6 6h2v1H6zM9 6h2v1H9zM3 8h2v1H3zM6 8h2v1H6zM9 8h2v1H9zM3 10h2v1H3zM6 10h2v1H6zM9 10h2v1H9z" fill="#777" stroke="none" /></Icon>
        <ViewButtons>
          <ViewButton $on aria-label="普通"><Icon w={13} h={13}><path d="M.5.500h12v12H.5zM.5 4.500h12M.5 8.500h12M4.500.500v12M8.500.500v12" stroke="#666" /></Icon></ViewButton>
          <ViewButton aria-label="页面布局"><Icon w={13} h={13}><path d="M.5.500h12v12H.5zM3.500 3.500h6v9h-6zM5 6.500h3M5 8.500h3" stroke="#666" /></Icon></ViewButton>
          <ViewButton aria-label="分页预览"><Icon w={13} h={13}><path d="M.5.500h12v12H.5zM.5 8.500h5v-8" stroke="#666" /></Icon></ViewButton>
        </ViewButtons>
      </StatusBar>

      <TaskBar>
        <Task $w={48} aria-label="开始菜单"><svg width="16" height="16" viewBox="0 0 16 16" fill="#fff"><path d="M0 2.500l6.500-1v6H0zM7.500 1.300L16 0v7.500H7.500zM0 8.500h6.500v6l-6.500-1zM7.500 8.500H16V16l-8.500-1.300z" /></svg></Task>
        <Task $w={48} aria-label="搜索"><Icon w={16} h={17}><circle cx="10.500" cy="5.500" r="4.500" stroke="#fff" strokeWidth="1.500" /><path d="M7 9L0 16" stroke="#fff" strokeWidth="1.500" /></Icon></Task>
        <Task $w={48} aria-label="助手"><Icon w={16} h={16}><circle cx="8" cy="8" r="6.500" stroke="#fff" strokeWidth="2" /></Icon></Task>
        <Task $w={52} aria-label="风车">
          <svg width="20" height="20" viewBox="0 0 20 20" fill="#fff">
            {[0, 90, 180, 270].map((a) => <path key={a} transform={`rotate(${a} 10 10)`} d="M10 10C12 6 10 0 5 0 1 0-1 3 0 6c1 4 6 5 10 4z" />)}
            {[0, 90, 180, 270].map((a) => <path key={a} transform={`rotate(${a} 10 10)`} fill="none" stroke="#23261f" d="M10 10C12 7 12 3 9 0" />)}
          </svg>
        </Task>
        <Apps>
          <Task $run aria-label="浏览器"><svg width="20" height="22" viewBox="0 0 20 22" fill="#0a7cdc"><path d="M0 9C1 3 5 0 10 0c6 0 10 4 10 10v3H7c0 5 7 6 11 3v4c-6 4-16 1-16-6 0-4 3-6 6-7-1 1-1 2-1 3h7c0-6-10-6-14-1z" /></svg></Task>
          <Task><PsMark>Ps</PsMark></Task>
          <Task aria-label="音乐"><svg width="24" height="24" viewBox="0 0 24 24" fill="none" stroke="#fff" strokeWidth="2"><rect width="24" height="24" rx="4" fill="#dd001b" stroke="none" /><path d="M16 5c-3-1-5 1-4 4l1 5c0 2-4 2-4-1 0-5 9-5 9 1 0 7-13 7-13-1 0-3 2-5 4-6" /></svg></Task>
          <Task aria-label="计算器"><svg width="18" height="24" viewBox="0 0 18 24"><path d="M0 0h18v24H0z" fill="#fff" /><path d="M2 2h14v4H2z" fill="#23261f" /><path d="M3 9.500h12M3 13.500h12M3 17.500h12M3 21h12" stroke="#23261f" strokeWidth="2" strokeDasharray="2 3" /></svg></Task>
          <Task $run $active aria-label="Excel"><svg width="22" height="22" viewBox="0 0 22 22"><path d="M11 3h10v16H11z" fill="#fff" /><path d="M13 6h7M13 9h7M13 12h7M13 15h7" stroke={GREEN} /><path d="M0 2l13-2v22L0 20z" fill={GREEN} /><path d="M4 7l5 8M9 7l-5 8" stroke="#fff" strokeWidth="2" /></svg></Task>
          <Task $run aria-label="PowerPoint"><svg width="23" height="22" viewBox="0 0 23 22"><path d="M12 3h10v16H12z" fill="#fff" stroke="#d24625" /><path d="M14 14.500h6M14 16.500h6" stroke="#d24625" /><path d="M17 5.500A3.200 3.200 0 1 1 14 9h3z" fill="#d24625" /><path d="M0 2l13-2v22L0 20z" fill="#d24625" /><path d="M5 15V8h2q2 0 2 2t-2 2H5" fill="none" stroke="#fff" strokeWidth="2" /></svg></Task>
        </Apps>
        <Tray>
          <TrayText $w={76}>50℃<br />CPU温度</TrayText>
          <TrayIcon aria-label="显示隐藏的图标"><Icon w={12} h={7}><path d="M1 6l5-5 5 5" stroke="#fff" /></Icon></TrayIcon>
          <TrayIcon aria-label="安全"><svg width="16" height="16" viewBox="0 0 16 16"><circle cx="8" cy="8" r="8" fill="#f8dc08" /><path d="M8 0a8 8 0 0 0-8 8h3a5 5 0 0 1 5-5z" fill="#3ea51f" /><path d="M8 4v8M4 8h8" stroke="#287a20" strokeWidth="2" /></svg></TrayIcon>
          <TrayIcon aria-label="电源"><Icon w={17} h={12}><path d="M6.500 2.500h8v7h-9M15.500 4v4M8 4l4 4M12 4L8 8M1.500 0v3M4.500 0v3M0 3.500h6v2l-2 1H2l-2-1zM3 6v5" stroke="#fff" /></Icon></TrayIcon>
          <TrayIcon aria-label="音量"><Icon w={17} h={14}><path d="M.5 4.500h3l4-4v13l-4-4h-3zM10 4.500q2 2.500 0 5M12 2.500q4 4.500 0 9M14 .5q5 6.500 0 13" stroke="#fff" /></Icon></TrayIcon>
          <TrayIcon aria-label="网络"><Icon w={14} h={14}><path d="M1 13C1 6 6 1 13 1M4 13c0-5 4-9 9-9M7 13c0-3 3-6 6-6" stroke="#ddd" /><path d="M10 13q0-3 3-3v3z" fill="#fff" stroke="#fff" /></Icon></TrayIcon>
          <TrayIcon>英</TrayIcon>
          <TrayIcon $w={32} aria-label="搜狗"><SogouMark size={16} /></TrayIcon>
          <TrayText $w={78}>9:09<br />2020/6/18</TrayText>
          <TrayIcon $w={39} aria-label="通知">
            <svg width="22" height="22" viewBox="0 0 22 22"><path d="M2 0h14v16H2z" fill="#fff" /><path d="M5 4h9M5 7h9M5 10h6" stroke="#23261f" /><path d="M.5 4v13" stroke="#fff" /><rect x="9" y="8" width="13" height="13" rx="2" fill="#e20d13" /><text x="15.500" y="18" textAnchor="middle" fontFamily="Open Sans" fontSize="10" fill="#fff">4</text></svg>
          </TrayIcon>
          <TrayIcon $w={36} aria-label="操作中心"><Icon w={16} h={16}><path d="M.5.500h15v12H10L8 15l-2-2.500H.5z" stroke="#fff" /></Icon></TrayIcon>
          <ShowDesktop aria-label="显示桌面" />
        </Tray>
      </TaskBar>

      <FloatThumb />
      <Tooltip role="tooltip">个性设置，点我看看</Tooltip>
      <ImeBar>
        <ImeLogo aria-label="搜狗输入法"><SogouMark size={28} /></ImeLogo>
        <ImeButton>英</ImeButton>
        <ImeButton aria-label="标点"><svg width="10" height="12" viewBox="0 0 10 12" fill="currentColor"><circle cx="2.500" cy="3" r="2" /><path d="M6 6h3q0 4-3 5z" /></svg></ImeButton>
        <ImeButton aria-label="表情"><svg width="16" height="16" viewBox="0 0 16 16" fill="none" stroke="currentColor" strokeWidth="2"><circle cx="8" cy="8" r="7" /><path d="M5.500 4.500v3M10.500 4.500v3M4 9q4 5 8 0" /></svg></ImeButton>
        <ImeButton aria-label="语音"><svg width="12" height="16" viewBox="0 0 12 16" fill="currentColor"><rect x="3" width="6" height="10" rx="3" /><path d="M0 6h2q0 5 4 5t4-5h2q0 6-5 7v3H5v-3Q0 12 0 6z" /></svg></ImeButton>
        <ImeButton aria-label="键盘"><svg width="16" height="12" viewBox="0 0 16 12"><rect width="16" height="12" rx="1" fill="currentColor" /><path d="M2 3h12M2 6h12" stroke="#fff" strokeWidth="2" strokeDasharray="2 1" /><path d="M4 9.500h8" stroke="#fff" /></svg></ImeButton>
        <ImeButton aria-label="用户"><svg width="14" height="15" viewBox="0 0 14 15" fill="#b4c0d8"><circle cx="6" cy="4" r="4" /><path d="M0 14q0-6 6-6t4 6z" /><path d="M8.500 8.500h4v5h-4z" stroke="#b4c0d8" fill="#fff" /></svg></ImeButton>
        <ImeButton aria-label="皮肤"><svg width="15" height="14" viewBox="0 0 15 14" fill="currentColor"><path d="M4 0q3.500 3 7 0l4 3-2 4-2-1v8H4V6L2 7 0 3z" /></svg></ImeButton>
        <ImeButton aria-label="工具箱"><svg width="14" height="13" viewBox="0 0 14 13" fill="currentColor"><path d="M0 0h6v6H0zM0 7h6v6H0zM8 7h6v6H8z" /><path d="M8.500.500h5v5h-5z" fill="none" stroke="currentColor" /></svg></ImeButton>
      </ImeBar>
      <Watermark>
        <BrandRow>
          <BrandLatin>Bai</BrandLatin>
          <BrandPaw>
            <svg width="74" height="76" viewBox="0 0 74 76" fill="rgba(255,255,255,.65)" stroke="rgba(130,130,130,.4)" strokeWidth="1.500">
              <ellipse cx="11" cy="30" rx="9" ry="12" /><ellipse cx="28" cy="13" rx="9" ry="12" /><ellipse cx="50" cy="15" rx="9" ry="12" transform="rotate(10 50 15)" /><ellipse cx="63" cy="35" rx="9" ry="12" />
              <path d="M37 32c12 0 14 10 22 17 11 9 8 26-6 26-8 0-24 0-32 0-15 0-17-16-7-25 9-8 12-18 23-18z" />
            </svg>
            <PawText>du</PawText>
          </BrandPaw>
          <BrandHan>经验</BrandHan>
        </BrandRow>
        <Site>jingyan.baidu.com</Site>
      </Watermark>
    </App_>
  );
}
